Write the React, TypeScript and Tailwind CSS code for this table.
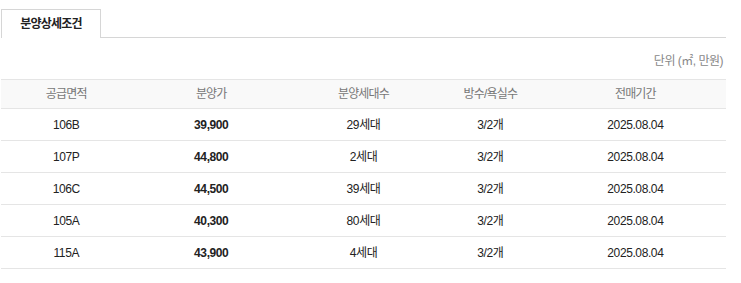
const rows = [
  { area: "106B", price: "39,900", units: "29세대", rooms: "3/2개", resale: "2025.08.04" },
  { area: "107P", price: "44,800", units: "2세대", rooms: "3/2개", resale: "2025.08.04" },
  { area: "106C", price: "44,500", units: "39세대", rooms: "3/2개", resale: "2025.08.04" },
  { area: "105A", price: "40,300", units: "80세대", rooms: "3/2개", resale: "2025.08.04" },
  { area: "115A", price: "43,900", units: "4세대", rooms: "3/2개", resale: "2025.08.04" },
];

const headers = ["공급면적", "분양가", "분양세대수", "방수/욕실수", "전매기간"];

export default function App() {
  return (
    <div className="w-[741px] h-[283px] bg-white pl-[1px] font-['Liberation_Sans','Noto_Sans_CJK_KR',sans-serif] tracking-[-0.4px]">
      <div className="w-[725px]">
        {/* tabs */}
        <div className="flex pt-[9px] border-b border-[#d6d6d6]">
          <div className="w-[100px] h-[29px] -mb-px border border-b-0 border-[#d6d6d6] bg-white flex items-center justify-center text-[12px] font-bold tracking-[-0.8px] text-[#222]">
            분양상세조건
          </div>
        </div>

        <p className="mt-[14px] h-[18px] text-right pr-[3px] text-[12px] leading-[18px] tracking-[-0.5px] text-[#888]">
          단위 (㎡, 만원)
        </p>

        <table className="mt-[9px] w-full table-fixed border-collapse text-[12px]">
          <colgroup>
            <col className="w-[18%]" />
            <col className="w-[22%]" />
            <col className="w-[20%]" />
            <col className="w-[15%]" />
            <col className="w-[25%]" />
          </colgroup>
          <thead>
            <tr className="bg-[#f9f9f9] border-y border-[#e5e5e5]">
              {headers.map((h) => (
                <th key={h} className="h-[29px] p-0 font-normal tracking-[-0.8px] text-[#777] text-center">
                  {h}
                </th>
              ))}
            </tr>
          </thead>
          <tbody className="text-[#222]">
            {rows.map((r) => (
              <tr key={r.area} className="border-b border-[#e5e5e5]">
                <td className="h-[32px] p-0 text-center">{r.area}</td>
                <td className="h-[32px] p-0 text-center font-bold">{r.price}</td>
                <td className="h-[32px] p-0 text-center">{r.units}</td>
                <td className="h-[32px] p-0 text-center">{r.rooms}</td>
                <td className="h-[32px] p-0 text-center">{r.resale}</td>
              </tr>
            ))}
          </tbody>
        </table>
      </div>
    </div>
  );
}
